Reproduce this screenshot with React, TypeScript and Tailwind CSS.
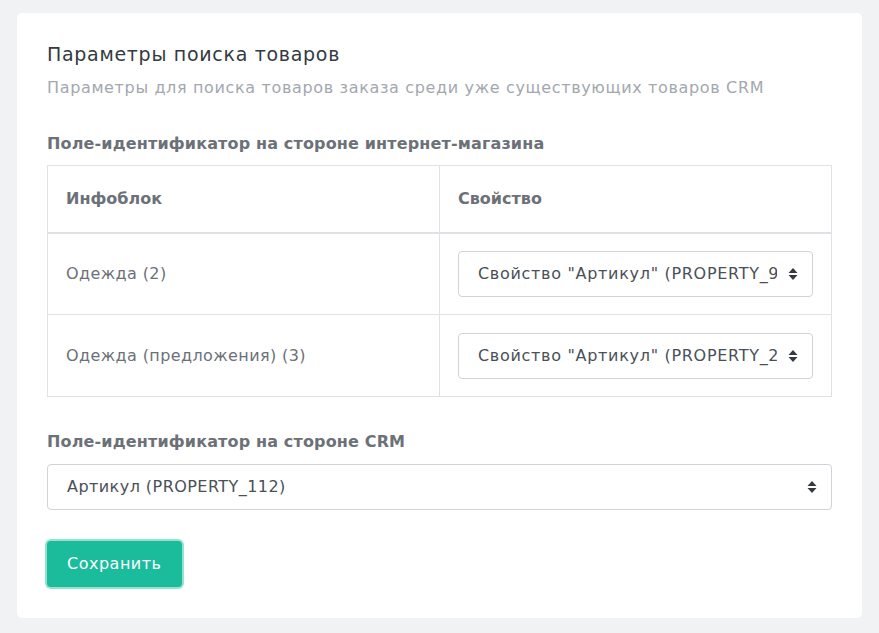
import React from "react";

const font = { fontFamily: '"DejaVu Sans", "Noto Sans", sans-serif' };

function Arrows() {
  return (
    <svg width="10" height="14" viewBox="0 0 10 14" className="shrink-0">
      <path d="M5 1 L9.5 6 H0.5 Z" fill="#343a40" />
      <path d="M5 13 L9.5 8 H0.5 Z" fill="#343a40" />
    </svg>
  );
}

function FakeSelect({ text, wide }: { text: string; wide?: boolean }) {
  return (
    <div className="flex h-[46px] items-center rounded-[4px] border border-[#ced4da] bg-white pl-[19px] pr-[14px]">
      <div
        className={
          wide
            ? "min-w-0 flex-1 overflow-hidden whitespace-nowrap text-[16px] tracking-[0.7px] text-[#495057]"
            : "min-w-0 flex-1 overflow-hidden whitespace-nowrap text-[16px] tracking-[0.45px] text-[#495057]"
        }
      >
        {text}
      </div>
      <div className="ml-[11px] flex shrink-0 items-center">
        <Arrows />
      </div>
    </div>
  );
}

export default function App() {
  return (
    <div className="min-h-[633px] bg-[#f1f2f4] pb-[16px] pl-[17px] pr-[17px] pt-[13px]" style={font}>
      <div className="rounded-[5px] bg-white px-[30px] pb-[31px] pt-[29px]">
        <h2 className="text-[19px] leading-[24px] tracking-[0.7px] text-[#343a40]">Параметры поиска товаров</h2>
        <p className="mt-[11px] text-[16px] leading-[22px] tracking-[0.65px] text-[#a3a8ae]">
          Параметры для поиска товаров заказа среди уже существующих товаров CRM
        </p>
        <div className="mt-[35px] text-[16px] font-bold leading-[20px] tracking-[0.15px] text-[#6c7178]">
          Поле-идентификатор на стороне интернет-магазина
        </div>
        <table className="mt-[11px] w-full table-fixed border-collapse text-[16px]">
          <thead>
            <tr className="h-[67px]">
              <th className="border border-b-2 border-[#dee2e6] px-[18px] text-left font-bold text-[#6c7178]">
                Инфоблок
              </th>
              <th className="border border-b-2 border-[#dee2e6] px-[18px] text-left font-bold text-[#6c7178]">
                Свойство
              </th>
            </tr>
          </thead>
          <tbody>
            <tr className="h-[82px]">
              <td className="border border-[#dee2e6] px-[18px] tracking-[0.4px] text-[#6c7178]">Одежда (2)</td>
              <td className="border border-[#dee2e6] px-[18px]">
                <FakeSelect wide text='Свойство "Артикул" (PROPERTY_9)' />
              </td>
            </tr>
            <tr className="h-[82px]">
              <td className="border border-[#dee2e6] px-[18px] tracking-[0.4px] text-[#6c7178]">
                Одежда (предложения) (3)
              </td>
              <td className="border border-[#dee2e6] px-[18px]">
                <FakeSelect wide text='Свойство "Артикул" (PROPERTY_21)' />
              </td>
            </tr>
          </tbody>
        </table>
        <div className="mt-[35px] text-[16px] font-bold leading-[20px] tracking-[0.15px] text-[#6c7178]">
          Поле-идентификатор на стороне CRM
        </div>
        <div className="mt-[12px]">
          <FakeSelect text="Артикул (PROPERTY_112)" />
        </div>
        <button className="mt-[31px] h-[46px] rounded-[4px] bg-[#1abc9c] px-[20px] text-[16px] tracking-[0.5px] text-white outline-none ring-[2px] ring-[#94e2cf]">
          Сохранить
        </button>
      </div>
    </div>
  );
}
